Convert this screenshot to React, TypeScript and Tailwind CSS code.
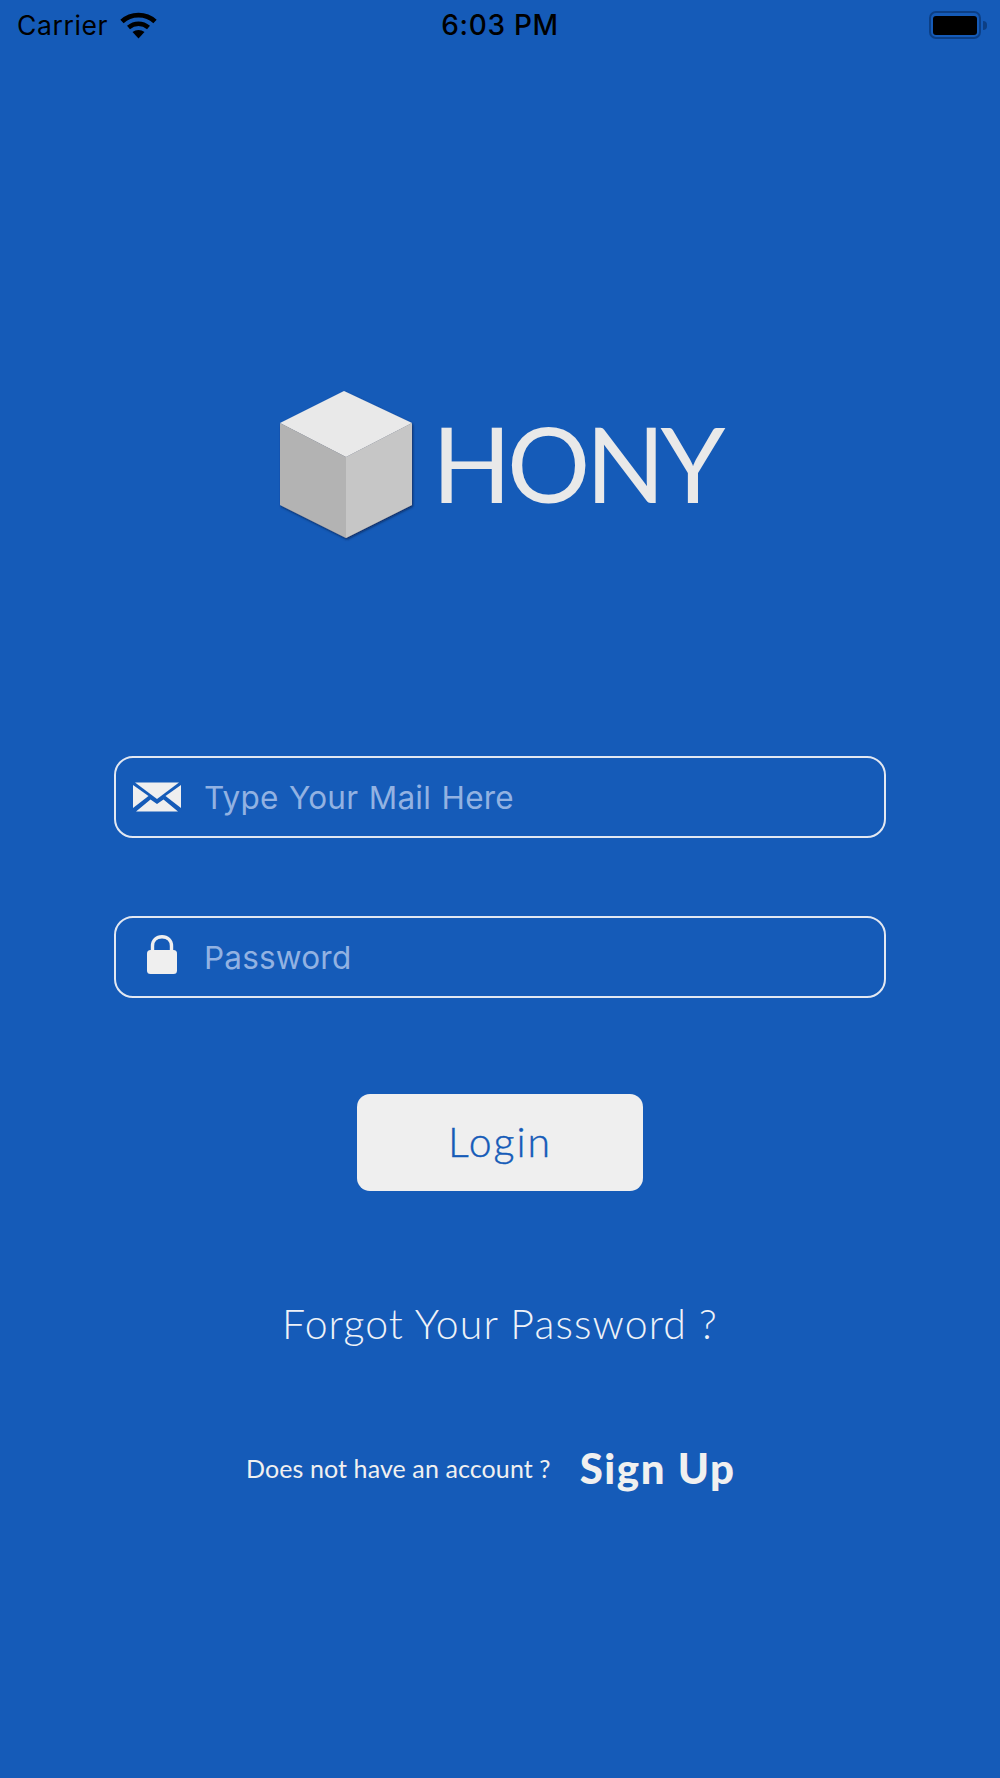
const lato = "font-['Lato','Open_Sans',sans-serif]";

const WifiIcon = () => (
  <svg width="37" height="27" viewBox="0 0 37 27" fill="none" className="ml-[12px]">
    <path d="M2 9.5C11 1 26 1 35 9.5" stroke="#000" strokeWidth="4.8" />
    <path d="M8.5 15.5C14.5 10.5 22.5 10.5 28.5 15.5" stroke="#000" strokeWidth="4.6" />
    <path d="M12.5 20L18.5 26.5L24.5 20C21 17.2 16 17.2 12.5 20Z" fill="#000" />
  </svg>
);

const Battery = () => (
  <div className="flex items-center">
    <div className="flex h-[28px] w-[52px] items-center justify-center rounded-[7px] border-2 border-[#0c3f85]">
      <div className="h-[19px] w-[44px] rounded-[3px] bg-black" />
    </div>
    <div className="ml-[2px] h-[9px] w-[4px] rounded-r-full bg-[#0c3f85]" />
  </div>
);

const StatusBar = () => (
  <div className="flex h-[50px] items-center justify-between pl-[17px] pr-[13px] text-black font-['Inter',sans-serif]">
    <div className="flex w-[296px] items-center">
      <span className="text-[26.5px] leading-none tracking-[0.6px]">Carrier</span>
      <WifiIcon />
    </div>
    <span className="text-[28px] font-medium leading-none tracking-[0.7px]">6:03 PM</span>
    <div className="flex w-[300px] justify-end">
      <Battery />
    </div>
  </div>
);

const CubeLogo = () => (
  <svg width="140" height="154" viewBox="0 0 140 154" className="shrink-0">
    <defs>
      <filter id="cubeShadow" x="-10%" y="-10%" width="120%" height="120%">
        <feDropShadow dx="1" dy="1.5" stdDeviation="1.2" floodColor="#0a2a5c" floodOpacity="0.9" />
      </filter>
    </defs>
    <g filter="url(#cubeShadow)">
      <polygon points="2,34 66,2 134,34 68,68" fill="#e9e9e9" />
      <polygon points="2,34 68,68 68,149 2,116" fill="#b3b3b3" />
      <polygon points="68,68 134,34 134,116 68,149" fill="#c6c6c6" />
    </g>
  </svg>
);

const MailIcon = () => (
  <svg width="48" height="30" viewBox="0 0 48 30" className="mr-[10px]">
    <polygon points="2,0.5 46,0.5 24,17" fill="#efefef" />
    <polygon points="0,3 0,26 15.5,14" fill="#efefef" />
    <polygon points="48,3 48,26 32.5,14" fill="#efefef" />
    <path d="M3,29.5L17.5,17.5L24,22L30.5,17.5L45,29.5Z" fill="#efefef" />
  </svg>
);

const LockIcon = () => (
  <svg width="30" height="39" viewBox="0 0 30 39" className="mb-[5px]">
    <path d="M5.5 17V11C5.5 5.2 9.5 1.7 15 1.7C20.5 1.7 24.5 5.2 24.5 11V17" fill="none" stroke="#efefef" strokeWidth="3.4" />
    <rect x="0" y="15" width="30" height="24" rx="3.5" fill="#efefef" />
  </svg>
);

const Field = ({ icon, label }: { icon: React.ReactNode; label: string }) => (
  <div className="flex h-[82px] w-[772px] items-center rounded-[19px] border-2 border-[#e2e8f2]">
    <div className="flex w-[88px] justify-center pl-[3px]">{icon}</div>
    <span className="pt-[2px] text-[31.5px] leading-none tracking-[0.2px] text-[#92b2e2] [word-spacing:1.5px] font-['Inter',sans-serif]">{label}</span>
  </div>
);

export default function App() {
  return (
    <div className="flex h-[1778px] w-[1000px] flex-col overflow-hidden bg-[#155bb8]">
      <StatusBar />
      <div className="mt-[339px] flex items-center pl-[278px]">
        <CubeLogo />
        <span className={`${lato} mb-[6px] ml-[14px] text-[104px] leading-none tracking-[-4.5px] text-[#e9e9e9]`}>HONY</span>
      </div>
      <div className="mt-[213px] flex flex-col items-center gap-[78px]">
        <Field icon={<MailIcon />} label="Type Your Mail Here" />
        <Field icon={<LockIcon />} label="Password" />
      </div>
      <div className="mt-[96px] flex justify-center">
        <button className={`${lato} h-[97px] w-[286px] rounded-[13px] bg-[#efefef] pb-[2px] text-[41px] font-light tracking-[2px] text-[#155bb8] [-webkit-text-stroke:0.4px_#155bb8]`}>
          Login
        </button>
      </div>
      <p className={`${lato} mt-[112px] text-center text-[41px] font-light leading-none tracking-[1.1px] text-[#eef2f8]`}>
        Forgot Your Password ?
      </p>
      <div className={`${lato} mt-[103px] flex items-center pl-[246px] text-[#f0f0f0]`}>
        <span className="text-[25px] leading-none tracking-[0.1px]">Does not have an account ?</span>
        <span className="ml-[29px] text-[42px] font-black leading-none tracking-[1.6px]">Sign Up</span>
      </div>
    </div>
  );
}
